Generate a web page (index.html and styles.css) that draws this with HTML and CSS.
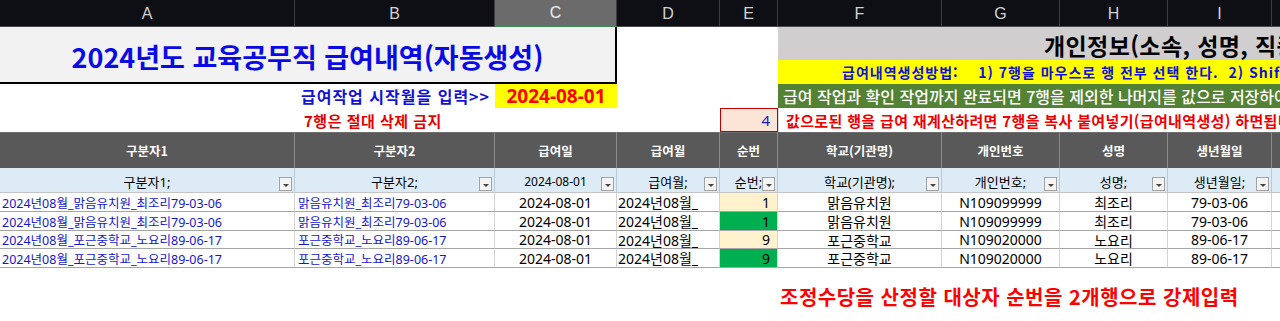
FILE: index.html
```html
<!DOCTYPE html>
<html lang="ko">
<head>
<meta charset="utf-8">
<title>2024년도 교육공무직 급여내역</title>
<link rel="stylesheet" href="styles.css">
</head>
<body>
<div class="sheet">
  <div class="col-h">A</div>
  <div class="col-h">B</div>
  <div class="col-h sel">C</div>
  <div class="col-h">D</div>
  <div class="col-h">E</div>
  <div class="col-h">F</div>
  <div class="col-h">G</div>
  <div class="col-h">H</div>
  <div class="col-h">I</div>
  <div class="col-h last"></div>

  <div class="title">2024년도 교육공무직 급여내역(자동생성)</div>
  <div class="blank span2"></div>
  <div class="band gray">개인정보(소속, 성명, 직종 등)</div>
  <div class="blank span2"></div>
  <div class="band yellow">급여내역생성방법:    1) 7행을 마우스로 행 전부 선택 한다.  2) Shift + 아래방향키로 범위를 지정한다.</div>
  <div class="prompt span2">급여작업 시작월을 입력&gt;&gt;</div>
  <div class="date">2024-08-01</div>
  <div class="blank span2"></div>
  <div class="band green">급여 작업과 확인 작업까지 완료되면 7행을 제외한 나머지를 값으로 저장하여야 합니다.</div>
  <div class="blank"></div>
  <div class="warn">7행은 절대 삭제 금지</div>
  <div class="blank span2"></div>
  <div class="count">4</div>
  <div class="band redtext">값으로된 행을 급여 재계산하려면 7행을 복사 붙여넣기(급여내역생성) 하면됩니다.</div>

  <div class="hd">구분자1</div>
  <div class="hd">구분자2</div>
  <div class="hd">급여일</div>
  <div class="hd">급여월</div>
  <div class="hd">순번</div>
  <div class="hd">학교(기관명)</div>
  <div class="hd">개인번호</div>
  <div class="hd">성명</div>
  <div class="hd">생년월일</div>
  <div class="hd last"></div>

  <div class="ft">구분자1;<span class="dd"></span></div>
  <div class="ft">구분자2;<span class="dd"></span></div>
  <div class="ft small">2024-08-01<span class="dd"></span></div>
  <div class="ft">급여월;<span class="dd"></span></div>
  <div class="ft">순번;<span class="dd"></span></div>
  <div class="ft">학교(기관명);<span class="dd"></span></div>
  <div class="ft">개인번호;<span class="dd"></span></div>
  <div class="ft">성명;<span class="dd"></span></div>
  <div class="ft">생년월일;<span class="dd"></span></div>
  <div class="ft last"></div>

  <div class="td key">2024년08월_맑음유치원_최조리79-03-06</div>
  <div class="td key2">맑음유치원_최조리79-03-06</div>
  <div class="td c">2024-08-01</div>
  <div class="td l">2024년08월_</div>
  <div class="td r pale">1</div>
  <div class="td c">맑음유치원</div>
  <div class="td c">N109099999</div>
  <div class="td c">최조리</div>
  <div class="td c">79-03-06</div>
  <div class="td last"></div>

  <div class="td key">2024년08월_맑음유치원_최조리79-03-06</div>
  <div class="td key2">맑음유치원_최조리79-03-06</div>
  <div class="td c">2024-08-01</div>
  <div class="td l">2024년08월_</div>
  <div class="td r mark">1</div>
  <div class="td c">맑음유치원</div>
  <div class="td c">N109099999</div>
  <div class="td c">최조리</div>
  <div class="td c">79-03-06</div>
  <div class="td last"></div>

  <div class="td key">2024년08월_포근중학교_노요리89-06-17</div>
  <div class="td key2">포근중학교_노요리89-06-17</div>
  <div class="td c">2024-08-01</div>
  <div class="td l">2024년08월_</div>
  <div class="td r pale">9</div>
  <div class="td c">포근중학교</div>
  <div class="td c">N109020000</div>
  <div class="td c">노요리</div>
  <div class="td c">89-06-17</div>
  <div class="td last"></div>

  <div class="td key">2024년08월_포근중학교_노요리89-06-17</div>
  <div class="td key2">포근중학교_노요리89-06-17</div>
  <div class="td c">2024-08-01</div>
  <div class="td l">2024년08월_</div>
  <div class="td r mark">9</div>
  <div class="td c">포근중학교</div>
  <div class="td c">N109020000</div>
  <div class="td c">노요리</div>
  <div class="td c">89-06-17</div>
  <div class="td last"></div>

  <div class="blank span5"></div>
  <div class="note">조정수당을 산정할 대상자 순번을 2개행으로 강제입력</div>
</div>
</body>
</html>
```

FILE: styles.css
```css
* { box-sizing: border-box; }
html, body { margin: 0; padding: 0; background: #ffffff; }
body { width: 1280px; height: 321px; overflow: hidden; }

.sheet {
  display: grid;
  grid-template-columns: 295px 200px 122px 103px 58px 164px 118px 108px 104px 1fr;
  grid-template-rows: 27px 33px 24px 24px 24px 36px 25px 19px 19px 18px 19px 53px;
  font-family: "Noto Sans", "Noto Sans CJK KR", sans-serif;
  color: #000;
}
.sheet > div {
  white-space: pre;
  overflow: hidden;
  display: flex;
  align-items: center;
}

.span2 { grid-column: span 2; }
.span5 { grid-column: span 5; }

/* column letters */
.col-h {
  background: #0e0f14;
  color: #d2d2d2;
  font-family: "Liberation Sans", "Noto Sans", sans-serif;
  font-size: 16px;
  justify-content: center;
  border-right: 1px solid #3e3e44;
  border-bottom: 1px solid #4a4a4a;
  padding-top: 1px;
}
.col-h.sel { background: #6b6b6b; color: #f0f0f0; border-bottom: 2px solid #3a8a5a; }
.col-h.last { border-right: none; }

/* top block */
.title {
  grid-column: span 3;
  grid-row: span 2;
  background: #f2f2f2;
  border-right: 2px solid #000;
  border-bottom: 2px solid #000;
  justify-content: center;
  color: #0a0ae6;
  font-family: "Noto Sans CJK KR", sans-serif;
  font-weight: 700;
  font-size: 27px;
  padding-top: 3px;
}
.blank { background: #fff; }
.band {
  grid-column: span 5;
  font-family: "Noto Sans CJK KR", sans-serif;
  font-weight: 700;
}
.gray { background: #d0cece; font-size: 23px; letter-spacing: 0.4px; padding-left: 266px; padding-top: 2px; }
.yellow { background: #ffff00; color: #1010d8; font-size: 14px; letter-spacing: 1px; padding-left: 64px; }
.green { background: #548235; color: #ffffff; font-size: 16px; letter-spacing: 0; padding-left: 5px; font-weight: 500; }
.redtext { background: #fff; color: #ee0000; font-size: 15px; letter-spacing: 0.35px; padding-left: 7px; border-left: 1px solid #d8d8d8; }

.prompt {
  justify-content: flex-end;
  padding-right: 5px;
  color: #1212d6;
  font-family: "Noto Sans CJK KR", sans-serif;
  font-weight: 700;
  font-size: 16px;
  letter-spacing: 1px;
}
.date {
  background: #ffff00;
  justify-content: center;
  color: #ff0000;
  font-weight: 700;
  font-size: 19px;
}
.warn {
  color: #e60000;
  font-family: "Noto Sans CJK KR", sans-serif;
  font-weight: 700;
  font-size: 15px;
  letter-spacing: 0.5px;
  padding-left: 9px;
}
.count {
  background: #fce4d6;
  border: 1px solid #c00000;
  justify-content: flex-end;
  padding-right: 7px;
  color: #1a1ad0;
  font-size: 15px;
}

/* table header */
.hd {
  background: #595959;
  color: #ffffff;
  font-family: "Noto Sans CJK KR", sans-serif;
  font-weight: 700;
  font-size: 12.5px;
  justify-content: center;
  border-right: 1px solid #8c8c8c;
  border-top: 1px solid #6e6e6e;
}
.hd.last { border-right: none; }

/* filter row */
.ft {
  position: relative;
  background: #ddebf7;
  font-size: 13px;
  justify-content: center;
  border-right: 1px solid #b9c9d8;
  border-bottom: 1px solid #c4c4c4;
  padding-top: 2px;
}
.ft.small { font-size: 12px; }
.ft.last { border-right: none; }
.dd {
  position: absolute;
  right: 2px;
  bottom: 1px;
  width: 13px;
  height: 14px;
  background: #f4f4f4;
  border: 1px solid #a3a3a3;
  display: flex;
  align-items: center;
  justify-content: center;
}
.dd::after {
  content: "";
  width: 0;
  height: 0;
  border-left: 3px solid transparent;
  border-right: 3px solid transparent;
  border-top: 3px solid #444;
  margin-top: 2px;
}

/* data rows */
.td {
  background: #fff;
  font-size: 14px;
  border-right: 1px solid #d4d4d4;
  border-bottom: 1px solid #a6a6a6;
}
.td.last { border-right: none; }
.td.c { justify-content: center; }
.td.l { padding-left: 1px; }
.td.r { justify-content: flex-end; padding-right: 7px; }
.td.key { color: #1616d2; font-size: 12.5px; padding-left: 2px; }
.td.key2 { color: #1616d2; font-size: 12.5px; padding-left: 3px; }
.td.pale { background: #fff2cc; }
.td.mark { background: #00b050; }

.note {
  grid-column: span 5;
  align-items: flex-start !important;
  padding-top: 17px;
  padding-left: 2px;
  color: #ff0000;
  font-family: "Noto Sans CJK KR", sans-serif;
  font-weight: 700;
  font-size: 20px;
  letter-spacing: 0.5px;
  line-height: 24px;
}
```
